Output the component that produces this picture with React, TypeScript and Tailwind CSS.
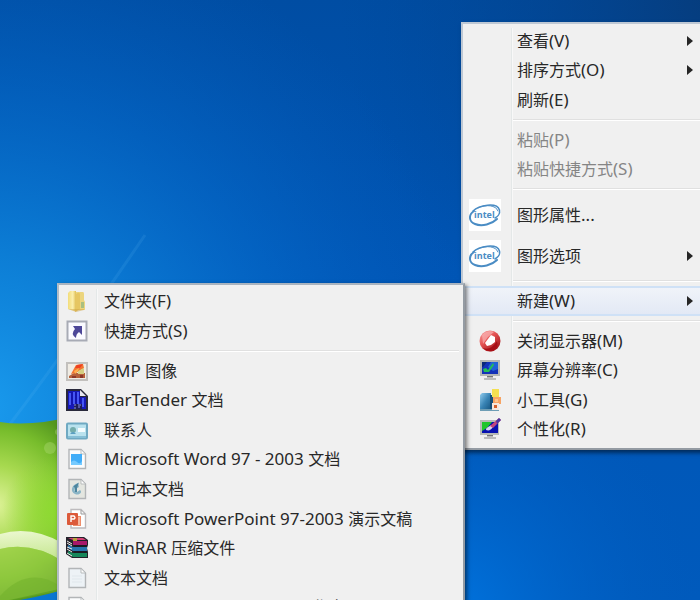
import type { ReactNode } from "react";

function IntelIcon() {
  return (
    <svg viewBox="0 0 32 32" className="h-8 w-8 bg-white">
      <g fill="none" stroke="#4a8cc4" strokeLinecap="round">
        <path d="M4 12 C10 6 28 3 30.500 11 C31.500 15 28 18 26 19" strokeWidth="1.500" />
        <path d="M5 12 C-1 16 0 23 6 25 C13 28 23 25 28 20" strokeWidth="2" />
        <path d="M9 9 C17 5 27 6 29 12" strokeWidth="1" />
      </g>
      <text x="5" y="19" fontSize="9" fontWeight="700" fill="#4a8cc4" fontFamily="Open Sans, sans-serif">
        intel
      </text>
    </svg>
  );
}

function PowerOffIcon() {
  return (
    <svg viewBox="0 0 22 22" className="h-[22px] w-[22px]">
      <defs>
        <linearGradient id="redBall" x1="0" y1="0" x2="0.8" y2="1">
          <stop offset="0" stopColor="#f8a5a5" />
          <stop offset="0.45" stopColor="#e55454" />
          <stop offset="1" stopColor="#9c0f14" />
        </linearGradient>
      </defs>
      <circle cx="11" cy="11" r="10.500" fill="url(#redBall)" />
      <path d="M3 5 A10 10 0 0 1 15 2 L9 7 L4 14Z" fill="#f9b2b2" opacity="0.7" />
      <path d="M12 5 L16 7 L16 12 L12 15 L8 16 L6 13 L9 9Z" fill="#fff" />
      <path d="M4 18 Q12 21 18 11 Q20 17 14 21 Q8 22 4 18" fill="#a80f16" />
    </svg>
  );
}

function ScreenIcon() {
  return (
    <svg viewBox="0 0 22 22" className="h-[22px] w-[22px]">
      <rect x="1" y="1" width="20" height="16" fill="#b4b6b4" />
      <rect x="3" y="3" width="16" height="12" fill="#1432b8" />
      <path d="M12 3 H19 V10 L14 12 L9 8Z" fill="#1f62d8" />
      <path d="M4 10 L7 9 L9 11 L14 4 L15 6 L10 13 L5 13Z" fill="#24bd58" />
      <path d="M3 3 H8 L4 8 H3Z" fill="#0c2a78" />
      <path d="M8 17 H14 V19 H17 V21 H5 V19 H8Z" fill="#bbb" />
      <path d="M8 17 H14 V18 H8Z" fill="#777" />
    </svg>
  );
}

function GadgetIcon() {
  return (
    <svg viewBox="0 0 22 22" className="h-[22px] w-[22px]">
      <defs>
        <linearGradient id="gadget" x1="0" y1="0" x2="1" y2="1">
          <stop offset="0" stopColor="#93cdee" />
          <stop offset="0.5" stopColor="#3984b5" />
          <stop offset="1" stopColor="#155480" />
        </linearGradient>
      </defs>
      <path d="M1 6 L3 4 H12 V21 H1Z" fill="url(#gadget)" />
      <path d="M11 6 H14 V21 H11Z" fill="#164f78" />
      <path d="M1 20 H20 V22 H1Z" fill="#6d9db5" />
      <rect x="13" y="0" width="7" height="8" fill="#f4e052" />
      <rect x="14" y="8" width="8" height="7" fill="#f7a464" />
      <rect x="13" y="14" width="7" height="7" fill="#f7e7dc" />
      <path d="M15 16 h3 v3 h-3Z" fill="#d5602c" />
      <rect x="16" y="10" width="3" height="3" fill="#ffc48b" />
    </svg>
  );
}

function PersonalizeIcon() {
  return (
    <svg viewBox="0 0 22 22" className="h-[22px] w-[22px]">
      <rect x="1" y="2" width="19" height="15" fill="#b7bab6" />
      <rect x="3" y="4" width="16" height="11" fill="#0812b0" />
      <path d="M3 4 H13 L8 10 L3 13Z" fill="#20c52c" />
      <path d="M7 12 C7 9 10 9 12 7 L14 9 C12 12 10 13 7 12" fill="#d9d3ee" />
      <path d="M11 8 L20 0 L22 2 L14 10Z" fill="#c2457c" />
      <path d="M17 3 L20 0 L22 2 L18 6Z" fill="#4b35a0" />
      <path d="M8 17 H14 V19 H17 V21 H5 V19 H8Z" fill="#bbb" />
      <path d="M8 17 H14 V18 H8Z" fill="#777" />
    </svg>
  );
}

function FolderIcon() {
  return (
    <svg viewBox="0 0 22 22" className="h-[22px] w-[22px]">
      <defs>
        <linearGradient id="folder" x1="0" y1="0" x2="1" y2="0">
          <stop offset="0" stopColor="#f2dc79" />
          <stop offset="0.6" stopColor="#fbefaf" />
          <stop offset="1" stopColor="#e0bf55" />
        </linearGradient>
      </defs>
      <path d="M10 2 H17 Q18 2 18 4 V10 L19 12 V20 H9Z" fill="#ecd57e" />
      <path d="M15 12 H18 V18 H15Z" fill="#a9bf80" />
      <path d="M2 3 L4 1 H10 V20 L9 21 L2 19Z" fill="url(#folder)" />
      <path d="M10 4 Q14 1 14 5 V19 L9 22Z" fill="#e6c662" />
      <path d="M2 19 L10 22 L18 20 V19 H2Z" fill="#cda443" opacity="0.5" />
    </svg>
  );
}

function ShortcutIcon() {
  return (
    <svg viewBox="0 0 22 22" className="h-[22px] w-[22px]">
      <rect x="1.500" y="1.500" width="19" height="19" fill="#fafaff" stroke="#a8abb5" strokeWidth="2" />
      <path d="M7 6 H16 V15 L13 12 Q10 14 10 18 Q4 14 9 9Z" fill="#4d4798" />
    </svg>
  );
}

function BitmapIcon() {
  return (
    <svg viewBox="0 0 22 22" className="h-[22px] w-[22px]">
      <rect x="1" y="3" width="20" height="17" fill="#f0ece4" stroke="#c2c0bd" strokeWidth="2" />
      <path d="M3 18 V16 L8 13 H19 V18Z" fill="#b5603a" />
      <path d="M10 5 L17 4 L18 8 L10 13 L5 14Z" fill="#f27430" />
      <path d="M11 5 L17 4 L14 8 L9 8Z" fill="#ee4021" />
      <path d="M12 11 L18 8 V14 H12Z" fill="#d5cf82" />
      <path d="M6 16 h4 v2 h-4Z M14 15 h3 v3 h-3Z" fill="#8c382a" />
      <path d="M8 11 L13 8 L12 11 L9 14Z" fill="#ffb04c" />
    </svg>
  );
}

function BarTenderIcon() {
  return (
    <svg viewBox="0 0 22 22" className="h-[22px] w-[22px]">
      <path d="M0 0 H15 L22 7 V22 H0Z" fill="#29293b" />
      <path d="M2 2 H14 V8 H20 V20 H2Z" fill="#1719b8" />
      <path d="M4 4 V16 M8 3 V15 M12 3 V15 M17 9 V18" stroke="#4657f3" strokeWidth="2" />
      <path d="M6 3 V16 M10 3 V15 M14 8 V14" stroke="#1010a0" strokeWidth="1" />
      <path d="M14 1 L20 7 H14Z" fill="#e8e8f1" />
      <path d="M8 15 H16 V20 H8Z" fill="#1e1e58" />
      <path d="M8 16 H10 M12 16 H15 M8 19 H10 M13 17 V19" stroke="#8990e8" strokeWidth="1" />
    </svg>
  );
}

function ContactIcon() {
  return (
    <svg viewBox="0 0 22 22" className="h-[22px] w-[22px]">
      <rect x="1" y="4.500" width="20" height="15" rx="1" fill="#b9e2ee" stroke="#6fa9c2" strokeWidth="2" />
      <path d="M2 17 H20 V19 H2Z" fill="#86bfd6" />
      <circle cx="7" cy="11" r="3" fill="#74adab" />
      <path d="M4 15 Q7 11 10 15Z" fill="#5a9fc2" />
      <rect x="12" y="9" width="7" height="4" fill="#f4fcfe" />
    </svg>
  );
}

function Page({ children, fill = "#fbfcfd" }: { children?: ReactNode; fill?: string }) {
  return (
    <svg viewBox="0 0 22 22" className="h-[22px] w-[22px]">
      <path d="M3 1.500 H15 L19.500 6 V20.500 H3Z" fill={fill} stroke="#b2b5b7" strokeWidth="1.400" />
      <path d="M15 2 V6 H19" fill="#fff" stroke="#b9bcbd" strokeWidth="1" />
      {children}
    </svg>
  );
}

function WordIcon() {
  return (
    <Page>
      <rect x="5" y="6" width="11" height="11" fill="#41adf8" />
      <path d="M5 14 Q8 11 11 14 T16 13 V17 H5Z" fill="#75caff" />
    </Page>
  );
}

function JournalIcon() {
  return (
    <Page fill="#e4e6e0">
      <path d="M12 5 C5 7 4 14 9 16 C13 18 17 14 14 12 L11 14 L8 12 L13 9Z" fill="#8ab5c6" />
      <path d="M8 9 L11 7 L10 10 L10 14" fill="none" stroke="#4d869e" strokeWidth="2" />
    </Page>
  );
}

function PowerPointIcon() {
  return (
    <svg viewBox="0 0 22 22" className="h-[22px] w-[22px]">
      <path d="M5 1.500 H15 L19.500 6 V20 H5Z" fill="#fff" stroke="#bdbbbd" strokeWidth="1.400" />
      <path d="M15 2 V6 H19" fill="none" stroke="#999" />
      <path d="M7 8 H15 V18 H7Z" fill="#ee8d6b" />
      <path d="M13 9 V17" stroke="#ffe4d6" />
      <rect x="1" y="5" width="11" height="12" rx="1" fill="#dc5a3a" />
      <path d="M5 14 V8 H8 Q10 10 8 11 H5" fill="none" stroke="#fff" strokeWidth="1.400" />
    </svg>
  );
}

function WinRarIcon() {
  return (
    <svg viewBox="0 0 22 22" className="h-[22px] w-[22px]">
      <path d="M0 0 H18 L22 3 V8 L21 11 L22 15 V21 H6 L0 17Z" fill="#24222b" />
      <path d="M2 1 H17 L20 3 H7Z" fill="#d34275" />
      <path d="M7 4 H21 V8 H7Z" fill="#a8186a" />
      <path d="M2 8 L7 10 H21 V14 H7 L2 11Z" fill="#2776ae" />
      <path d="M2 14 L7 16 H21 V20 H7 L2 17Z" fill="#16875a" />
      <path d="M1 4 L6 7 M1 6 L6 9 M1 10 L6 12 M1 12 L6 15 M1 16 L6 19" stroke="#f1ede9" />
      <path d="M8 9 H21 M8 15 H21" stroke="#15131d" />
      <path d="M7 1 h4 v3 h-4Z" fill="#b8a13c" />
    </svg>
  );
}

function TextIcon() {
  return (
    <Page fill="#edf2f6">
      <path d="M6 9 H16 M6 12 H16 M6 15 H16" stroke="#e0e7ec" />
    </Page>
  );
}

function ExcelIcon() {
  return (
    <Page>
      <rect x="5" y="8" width="9" height="9" fill="#2e8b57" />
    </Page>
  );
}

/* Latin runs are set one size up so that they sit evenly beside the Chinese characters. */
function Label({ text }: { text: string }) {
  return (
    <>
      {text.split(/([\u4e00-\u9fff]+)/).map((run, i) =>
        i % 2 === 1 ? (
          run
        ) : run ? (
          <span key={i} className="text-[17px] leading-6">
            {run}
          </span>
        ) : null,
      )}
    </>
  );
}

type ItemProps = {
  label: string;
  icon?: ReactNode;
  arrow?: boolean;
  disabled?: boolean;
  active?: boolean;
  narrow?: boolean;
};

function Item({ label, icon, arrow, disabled, active, narrow }: ItemProps) {
  return (
    <button
      type="button"
      role="menuitem"
      disabled={disabled}
      aria-haspopup={arrow ? "menu" : undefined}
      className={`flex w-full items-center text-left text-base leading-6 whitespace-nowrap ${
        disabled ? "text-[#858585]" : "text-[#282828]"
      } ${active ? "rounded-xs border-y-2 border-[#cfe1f6] bg-linear-to-b from-[#f0f3f9] to-[#e3e9f5]" : ""}`}
    >
      <span className={`flex shrink-0 justify-end pr-2.5 ${narrow ? "w-[39px]" : "w-12"}`}>{icon}</span>
      <span className="flex-1 pl-1.5">
        <Label text={label} />
      </span>
      {arrow && (
        <svg viewBox="0 0 6 10" className="mr-3.5 h-2.5 w-1.5">
          <path d="M0 0 L6 5 L0 10Z" fill="#262626" />
        </svg>
      )}
    </button>
  );
}

function Divider({ narrow }: { narrow?: boolean }) {
  return (
    <div role="separator" className={`flex h-2.5 items-center pr-1 ${narrow ? "pl-10" : "pl-[50px]"}`}>
      <div className="h-0.5 w-full border-t border-[#e0e0e0] bg-white" />
    </div>
  );
}

function Gutter({ narrow }: { narrow?: boolean }) {
  return (
    <div
      aria-hidden="true"
      className={`absolute inset-y-1 w-0.5 border-l border-[#e4e8e8] bg-[#f8f8f8] ${narrow ? "left-[37px]" : "left-12"}`}
    />
  );
}

function Wallpaper() {
  return (
    <svg
      aria-hidden="true"
      viewBox="0 0 700 600"
      preserveAspectRatio="xMinYMax slice"
      className="absolute inset-0 h-full w-full"
    >
      <defs>
        <linearGradient id="sky" x1="0" y1="0" x2="0" y2="1">
          <stop offset="0" stopColor="#004da3" />
          <stop offset="0.45" stopColor="#0055b5" />
          <stop offset="1" stopColor="#005abc" />
        </linearGradient>
        <radialGradient id="glow" gradientUnits="userSpaceOnUse" cx="-20" cy="410" r="500">
          <stop offset="0" stopColor="#1a9bee" />
          <stop offset="0.3" stopColor="#0f86dc" stopOpacity="0.85" />
          <stop offset="0.65" stopColor="#0670d0" stopOpacity="0.45" />
          <stop offset="1" stopColor="#0460c0" stopOpacity="0" />
        </radialGradient>
        <radialGradient id="lower" gradientUnits="userSpaceOnUse" cx="440" cy="620" r="260">
          <stop offset="0" stopColor="#0076e2" />
          <stop offset="1" stopColor="#005cbf" stopOpacity="0" />
        </radialGradient>
        <radialGradient id="corner" gradientUnits="userSpaceOnUse" cx="720" cy="0" r="380">
          <stop offset="0" stopColor="#063c7c" />
          <stop offset="1" stopColor="#004595" stopOpacity="0" />
        </radialGradient>
        <radialGradient id="leaf" gradientUnits="userSpaceOnUse" cx="-5" cy="505" r="100">
          <stop offset="0" stopColor="#dff39a" />
          <stop offset="0.4" stopColor="#a7d94f" />
          <stop offset="0.75" stopColor="#78bd2c" />
          <stop offset="1" stopColor="#55981f" />
        </radialGradient>
        <linearGradient id="band" x1="0" y1="0" x2="0" y2="1">
          <stop offset="0" stopColor="#f6fce4" />
          <stop offset="1" stopColor="#cfec9b" />
        </linearGradient>
        <radialGradient id="lime" gradientUnits="userSpaceOnUse" cx="58" cy="510" r="55">
          <stop offset="0" stopColor="#8edb31" />
          <stop offset="1" stopColor="#8edb31" stopOpacity="0" />
        </radialGradient>
      </defs>
      <rect width="700" height="600" fill="url(#sky)" />
      <rect width="700" height="600" fill="url(#corner)" />
      <rect width="700" height="600" fill="url(#glow)" />
      <rect width="700" height="600" fill="url(#lower)" />
      <path d="M10 424 Q70 345 145 235" fill="none" stroke="#6cc0f5" strokeOpacity="0.13" strokeWidth="3" />
      <path d="M0 422 Q30 427 75 416 V586 Q40 598 0 603Z" fill="url(#leaf)" />
      <path d="M0 422 Q30 427 75 416 V586 Q40 598 0 603Z" fill="url(#lime)" />
      <path d="M0 534 Q32 525 64 544 V562 Q32 541 0 549Z" fill="url(#band)" opacity="0.85" />
      <path d="M0 549 Q32 541 64 562 V588 L0 602Z" fill="#9fcf4a" opacity="0.55" />
      <path d="M0 596 Q28 565 60 586 V591 L0 602Z" fill="#6faf2a" opacity="0.5" />
      <circle cx="50" cy="448" r="6" fill="#a9d66c" opacity="0.45" />
      <circle cx="58" cy="432" r="3" fill="#a9d66c" opacity="0.45" />
    </svg>
  );
}

export default function App() {
  return (
    <main className="relative h-screen overflow-hidden bg-[#0058b8] font-['Noto_Sans','Noto_Sans_CJK_SC',sans-serif]">
      <Wallpaper />

      <div
        role="menu"
        aria-label="桌面"
        className="absolute top-[22px] left-[461px] w-[248px] border-2 border-[#949ba3] border-t-[#bec8d4] border-l-[#bec8d4] bg-[#f0f0f0] pt-0.5 pb-1 shadow-[2px_3px_4px_rgba(0,0,0,0.5)]"
      >
        <Gutter />
        <div className="relative grid h-[89px] auto-rows-fr">
          <Item label="查看(V)" arrow />
          <Item label="排序方式(O)" arrow />
          <Item label="刷新(E)" />
        </div>
        <Divider />
        <div className="relative grid h-[59px] auto-rows-fr">
          <Item label="粘贴(P)" disabled />
          <Item label="粘贴快捷方式(S)" disabled />
        </div>
        <Divider />
        <div className="relative grid h-[82px] auto-rows-fr">
          <Item label="图形属性..." icon={<IntelIcon />} />
          <Item label="图形选项" icon={<IntelIcon />} arrow />
        </div>
        <Divider />
        <div className="relative grid h-[30px] auto-rows-fr">
          <Item label="新建(W)" arrow active />
        </div>
        <Divider />
        <div className="relative grid h-[118px] auto-rows-fr">
          <Item label="关闭显示器(M)" icon={<PowerOffIcon />} />
          <Item label="屏幕分辨率(C)" icon={<ScreenIcon />} />
          <Item label="小工具(G)" icon={<GadgetIcon />} />
          <Item label="个性化(R)" icon={<PersonalizeIcon />} />
        </div>
      </div>

      <div
        role="menu"
        aria-label="新建"
        className="absolute top-[283px] left-[57px] w-[408px] border-2 border-[#949ba3] border-t-[#aab4bf] border-l-[#b3bcc5] bg-[#f0f0f0] py-px shadow-[2px_2px_4px_rgba(0,0,0,0.5)]"
      >
        <Gutter narrow />
        <div className="relative grid h-[60px] auto-rows-fr">
          <Item narrow label="文件夹(F)" icon={<FolderIcon />} />
          <Item narrow label="快捷方式(S)" icon={<ShortcutIcon />} />
        </div>
        <Divider narrow />
        <div className="relative grid h-[266px] auto-rows-fr">
          <Item narrow label="BMP 图像" icon={<BitmapIcon />} />
          <Item narrow label="BarTender 文档" icon={<BarTenderIcon />} />
          <Item narrow label="联系人" icon={<ContactIcon />} />
          <Item narrow label="Microsoft Word 97 - 2003 文档" icon={<WordIcon />} />
          <Item narrow label="日记本文档" icon={<JournalIcon />} />
          <Item narrow label="Microsoft PowerPoint 97-2003 演示文稿" icon={<PowerPointIcon />} />
          <Item narrow label="WinRAR 压缩文件" icon={<WinRarIcon />} />
          <Item narrow label="文本文档" icon={<TextIcon />} />
          <Item narrow label="Microsoft Excel 97-2003 工作表" icon={<ExcelIcon />} />
        </div>
      </div>
    </main>
  );
}
